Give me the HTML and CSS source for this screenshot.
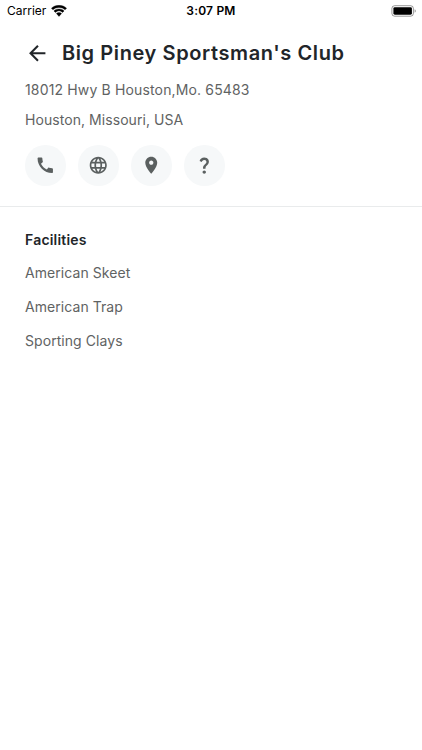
FILE: index.html
```html
<!DOCTYPE html>
<html lang="en">
<head>
<meta charset="utf-8">
<title>Big Piney Sportsman's Club</title>
<link rel="stylesheet" href="styles.css">
</head>
<body>
<div class="status">
  <div class="carrier"><span>Carrier</span>
    <svg width="16" height="12" viewBox="0 0 16 12"><path d="M8 .3C5 .3 2.400 1.400.4 3.200L1.900 4.800A9 9 0 0 1 14.100 4.800L15.600 3.200C13.600 1.400 11 .3 8 .3ZM8 4C6 4 4.200 4.700 2.900 5.900L4.400 7.400A5.400 5.400 0 0 1 11.600 7.400L13.100 5.900C11.800 4.700 10 4 8 4ZM8 7.600C7 7.600 6.100 8 5.400 8.500L8 11.400L10.600 8.500C9.900 8 9 7.600 8 7.600Z" stroke="#000" stroke-width=".35"/></svg>
  </div>
  <time class="clock">3:07 PM</time>
  <svg class="battery" width="26" height="12" viewBox="0 0 26 12"><rect x=".9" y=".7" width="21.500" height="10.500" rx="2.800" fill="none" stroke="#000" stroke-opacity=".4"/><rect x="2.400" y="2.200" width="18.500" height="7.500" rx="1.400"/><path d="M23.700 4.200v3.600c1.300-.7 1.300-2.900 0-3.600z" fill-opacity=".5"/></svg>
</div>
<header class="club">
  <div class="heading">
    <svg width="24.500" height="24.500" viewBox="0 0 24 24"><path d="M20 11H7.830l5.590-5.590L12 4l-8 8 8 8 1.410-1.410L7.830 13H20v-2z"/></svg>
    <h1>Big Piney Sportsman's Club</h1>
  </div>
  <p class="street">18012 Hwy B Houston,Mo. 65483</p>
  <p>Houston, Missouri, USA</p>
  <div class="actions">
    <span class="action"><svg width="20.500" height="20.500" viewBox="0 0 24 24"><path d="M20.010 15.380c-1.230 0-2.420-.2-3.530-.56-.35-.12-.74-.03-1.010.24l-1.570 1.970c-2.830-1.350-5.480-3.900-6.890-6.830l1.950-1.660c.27-.28.35-.67.24-1.020-.37-1.110-.56-2.300-.56-3.530 0-.54-.45-.99-.99-.99H4.190C3.650 3 3 3.240 3 3.990 3 13.280 10.730 21 20.010 21c.71 0 .99-.63.99-1.180v-3.450c0-.54-.45-.99-.99-.99z"/></svg></span>
    <span class="action"><svg width="20.500" height="20.500" viewBox="0 0 24 24"><path d="M11.990 2C6.470 2 2 6.480 2 12s4.470 10 9.990 10C17.520 22 22 17.520 22 12S17.520 2 11.990 2zm6.930 6h-2.950c-.32-1.250-.78-2.450-1.380-3.560 1.840.63 3.370 1.910 4.330 3.560zM12 4.040c.83 1.200 1.480 2.530 1.910 3.960h-3.820c.43-1.430 1.080-2.760 1.910-3.960zM4.260 14C4.100 13.360 4 12.690 4 12s.1-1.360.26-2h3.380c-.08.66-.14 1.320-.14 2s.06 1.340.14 2H4.260zm.82 2h2.950c.32 1.250.78 2.450 1.380 3.560-1.840-.63-3.370-1.900-4.330-3.560zm2.950-8H5.080c.96-1.660 2.490-2.930 4.330-3.560C8.810 5.550 8.350 6.750 8.030 8zM12 19.960c-.83-1.200-1.480-2.530-1.910-3.960h3.820c-.43 1.430-1.080 2.760-1.910 3.960zM14.340 14H9.660c-.09-.66-.16-1.320-.16-2s.07-1.350.16-2h4.680c.09.65.16 1.320.16 2s-.07 1.340-.16 2zm.25 5.560c.6-1.110 1.060-2.310 1.380-3.560h2.950c-.96 1.650-2.490 2.930-4.330 3.560zM16.360 14c.08-.66.14-1.320.14-2s-.06-1.340-.14-2h3.380c.16.64.26 1.310.26 2s-.1 1.360-.26 2h-3.380z"/></svg></span>
    <span class="action"><svg width="20.500" height="20.500" viewBox="0 0 24 24"><path d="M12 2C8.130 2 5 5.130 5 9c0 5.250 7 13 7 13s7-7.750 7-13c0-3.870-3.130-7-7-7zm0 9.500c-1.380 0-2.500-1.120-2.500-2.500s1.120-2.500 2.500-2.500 2.500 1.120 2.500 2.500-1.120 2.500-2.500 2.500z"/></svg></span>
    <span class="action"><svg width="20.500" height="20.500" viewBox="0 0 24 24"><path d="M11.070 12.850c.77-1.390 2.250-2.210 3.110-3.440.91-1.290.4-3.700-2.180-3.700-1.690 0-2.520 1.280-2.870 2.340L6.540 6.960C7.250 4.830 9.180 3 11.990 3c2.350 0 3.960 1.070 4.780 2.410.7 1.150 1.110 3.300.03 4.900-1.200 1.770-2.350 2.310-2.970 3.450-.25.46-.35.76-.35 2.240h-2.890c-.01-.78-.13-2.050.48-3.150zM14 20c0 1.100-.9 2-2 2s-2-.9-2-2 .9-2 2-2 2 .9 2 2z"/></svg></span>
  </div>
</header>
<main class="facilities">
  <h2>Facilities</h2>
  <p>American Skeet</p>
  <p>American Trap</p>
  <p>Sporting Clays</p>
</main>
</body>
</html>
```
FILE: styles.css
```css
* { box-sizing: border-box; }
body { margin: 0; background: #fff; font-family: Inter, "Liberation Sans", sans-serif; color: #5f6363; min-height: 750px; }
svg { display: block; flex: none; }
.status { height: 21px; display: grid; grid-template-columns: 1fr auto 1fr; align-items: center; padding: 0 5px 0 7px; color: #000; font-size: 12px; }
.carrier { display: flex; align-items: center; gap: 4.500px; letter-spacing: 0; }
.clock { font-weight: 600; letter-spacing: .2px; margin-right: 2px; }
.battery { justify-self: end; }
.club { height: 186px; padding: 16px 25px 0; border-bottom: 1px solid #e9ebec; }
.heading { display: flex; align-items: center; gap: 12.500px; height: 32px; margin-bottom: 6px; color: #212529; fill: #212529; }
.heading svg { margin-left: -.4px; margin-right: .4px; }
h1, h2, p { margin: 0; white-space: nowrap; }
h1 { font-size: 20px; line-height: 32px; font-weight: 600; letter-spacing: .6px; }
p { font-size: 14px; line-height: 20px; letter-spacing: .06px; }
.club p { height: 29.500px; line-height: 29.500px; }
.club .street { letter-spacing: .15px; }
.actions { display: flex; gap: 12.500px; margin-top: 11px; }
.action { width: 40.500px; height: 40.500px; border-radius: 50%; background: #f6f8f9; display: grid; place-items: center; fill: #5b6060; }
.facilities { padding: 22px 25px; }
h2 { font-size: 14px; line-height: 22px; font-weight: 600; letter-spacing: .2px; color: #212529; }
.facilities p { height: 33.600px; line-height: 33.600px; }
.facilities h2 + p { margin-top: 5.400px; }
```
